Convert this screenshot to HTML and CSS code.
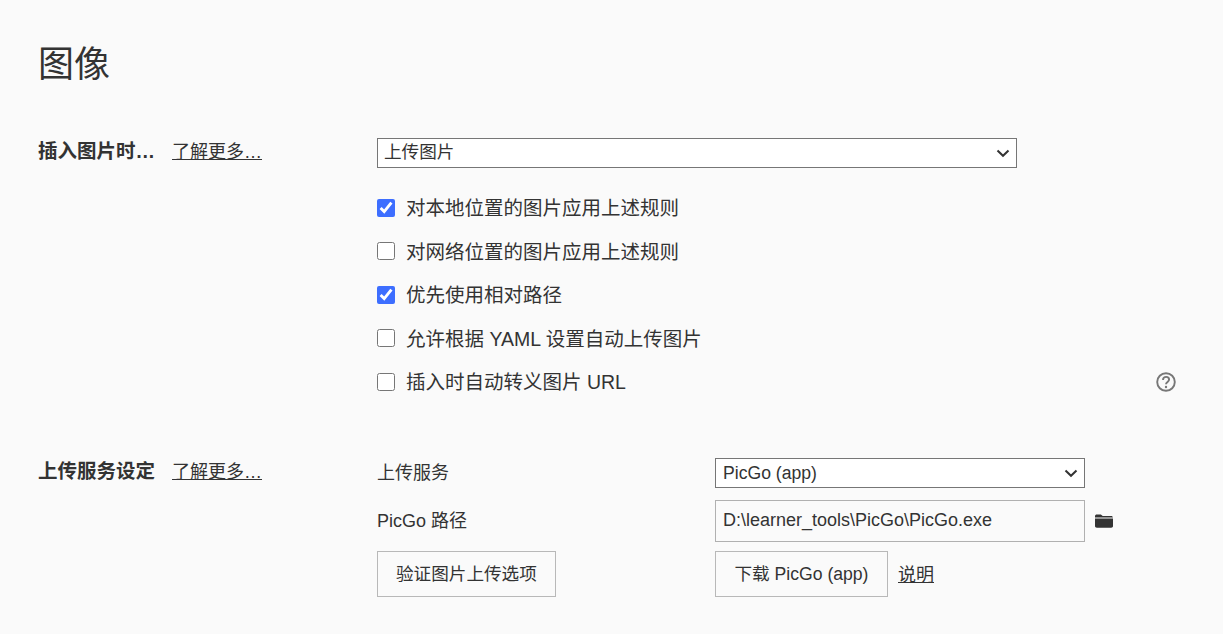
FILE: index.html
```html
<!DOCTYPE html>
<html lang="zh-CN">
<head>
<meta charset="utf-8">
<title>图像</title>
<link rel="stylesheet" href="styles.css">
</head>
<body>
<main class="page">
  <h1 class="title">图像</h1>

  <section class="section section-insert">
    <div class="side">
      <strong class="side-title">插入图片时…</strong>
      <a class="link" href="#">了解更多…</a>
    </div>
    <div class="content">
      <div class="select-wrap select-wide">
        <select class="select select-cjk"><option>上传图片</option></select>
        <svg class="chevron" viewBox="0 0 14 9"><path d="M1.500 1.500 7 6.800l5.500-5.300" fill="none" stroke="#333" stroke-width="2"/></svg>
      </div>
      <div class="checks">
        <label class="check"><input type="checkbox" checked><span>对本地位置的图片应用上述规则</span></label>
        <label class="check"><input type="checkbox"><span>对网络位置的图片应用上述规则</span></label>
        <label class="check"><input type="checkbox" checked><span>优先使用相对路径</span></label>
        <label class="check"><input type="checkbox"><span>允许根据 YAML 设置自动上传图片</span></label>
        <div class="check-row">
          <label class="check"><input type="checkbox"><span>插入时自动转义图片 URL</span></label>
          <svg class="help" viewBox="0 0 20 20"><circle cx="10" cy="10" r="8.800" fill="none" stroke="#777" stroke-width="1.900"/><path d="M7 7.900c0-1.800 1.300-3 3.100-3 1.700 0 3 1.100 3 2.600 0 2.400-3.100 2.400-3.100 4.800" fill="none" stroke="#777" stroke-width="1.900"/><circle cx="10" cy="15" r="1.200" fill="#777"/></svg>
        </div>
      </div>
    </div>
  </section>

  <section class="section section-upload">
    <div class="side">
      <strong class="side-title">上传服务设定</strong>
      <a class="link" href="#">了解更多…</a>
    </div>
    <div class="content form">
      <span class="form-label">上传服务</span>
      <div class="select-wrap select-narrow">
        <select class="select"><option>PicGo (app)</option></select>
        <svg class="chevron" viewBox="0 0 14 9"><path d="M1.500 1.500 7 6.800l5.500-5.300" fill="none" stroke="#333" stroke-width="2"/></svg>
      </div>
      <span class="form-label">PicGo 路径</span>
      <div class="path-row">
        <input class="path" type="text" value="D:\learner_tools\PicGo\PicGo.exe">
        <svg class="folder" viewBox="0 0 18 14"><path d="M0 2.200C0 1 .8.400 1.800.400h4.100l1.800 1.700h8.500c1 0 1.700.6 1.700 1.500H0z" fill="#333"/><path d="M0 4.600h18v7.500c0 1-.8 1.700-1.800 1.700H1.800C.8 13.800 0 13.100 0 12.100z" fill="#333"/></svg>
      </div>
      <div class="form-cell"><button class="btn" type="button">验证图片上传选项</button></div>
      <div class="btn-row">
        <button class="btn btn-download" type="button">下载 PicGo (app)</button>
        <a class="link link-note" href="#">说明</a>
      </div>
    </div>
  </section>
</main>
</body>
</html>
```

FILE: styles.css
```css
* { box-sizing: border-box; }

html, body { height: 100%; }

body {
  margin: 0;
  background: #fafafa;
  color: #333;
  font-family: "Liberation Sans", "Noto Sans CJK SC", sans-serif;
  font-size: 17.6px;
  overflow: hidden;
}

.page {
  padding: 40px 47px 0 38px;
}

.title {
  margin: 0 0 48px;
  font-size: 36px;
  font-weight: 400;
  line-height: 50px;
}

.section {
  display: flex;
}

.section-upload {
  margin-top: 63px;
}

.side {
  flex: 0 0 339px;
  display: flex;
  align-items: baseline;
  gap: 17px;
  line-height: 26px;
}

.side-title {
  font-size: 19.5px;
  font-weight: 700;
}

.link {
  color: #333;
  font-size: 18px;
  text-decoration: underline;
}

.link-note {
  margin-bottom: 2px;
}

.content {
  flex: 1;
  min-width: 0;
}

.select-wrap {
  position: relative;
  height: 30px;
}

.select-wide { width: 640px; }
.select-narrow { width: 370px; }

.select {
  appearance: none;
  display: block;
  width: 100%;
  height: 30px;
  padding: 0 30px 0 7px;
  border: 1px solid #767676;
  border-radius: 0;
  background: #fff;
  color: #333;
  font: inherit;
}

.select-cjk {
  padding: 0 30px 2px 6px;
}

.chevron {
  position: absolute;
  top: 11px;
  right: 7px;
  width: 14px;
  height: 9px;
  pointer-events: none;
}

.checks {
  display: flex;
  flex-direction: column;
  gap: 17.5px;
  margin-top: 26.5px;
}

.check {
  display: flex;
  align-items: center;
  gap: 11px;
  height: 26px;
  font-size: 19.5px;
}

.check span {
  padding-bottom: 2px;
}

.check input {
  width: 18px;
  height: 18px;
  margin: 0;
  accent-color: #3d6eff;
}

.check-row {
  display: flex;
  align-items: center;
  justify-content: space-between;
}

.help {
  width: 20px;
  height: 20px;
}

.form {
  display: grid;
  grid-template-columns: 338px 1fr;
  grid-template-rows: 30px 42px 46px;
  row-gap: 12px;
  align-items: center;
}

.form-label {
  font-size: 18px;
  line-height: 26px;
}

.path-row {
  display: flex;
  align-items: center;
  gap: 10px;
}

.path {
  width: 370px;
  height: 42px;
  padding: 0 7px;
  border: 1px solid #b0b0b0;
  border-radius: 0;
  background: #fafafa;
  color: #333;
  font: inherit;
  font-size: 18px;
}

.folder {
  width: 18px;
  height: 14px;
}

.form-cell {
  align-self: start;
  margin-top: -3px;
}

.btn-row {
  align-self: start;
  display: flex;
  align-items: center;
  gap: 10px;
  margin-top: -3px;
}

.btn {
  height: 46px;
  padding: 0 18px 2px;
  border: 1px solid #b8b8b8;
  border-radius: 0;
  background: #fafafa;
  color: #333;
  font: inherit;
}

.btn-download {
  width: 173px;
  padding: 0 0 2px;
}
```
